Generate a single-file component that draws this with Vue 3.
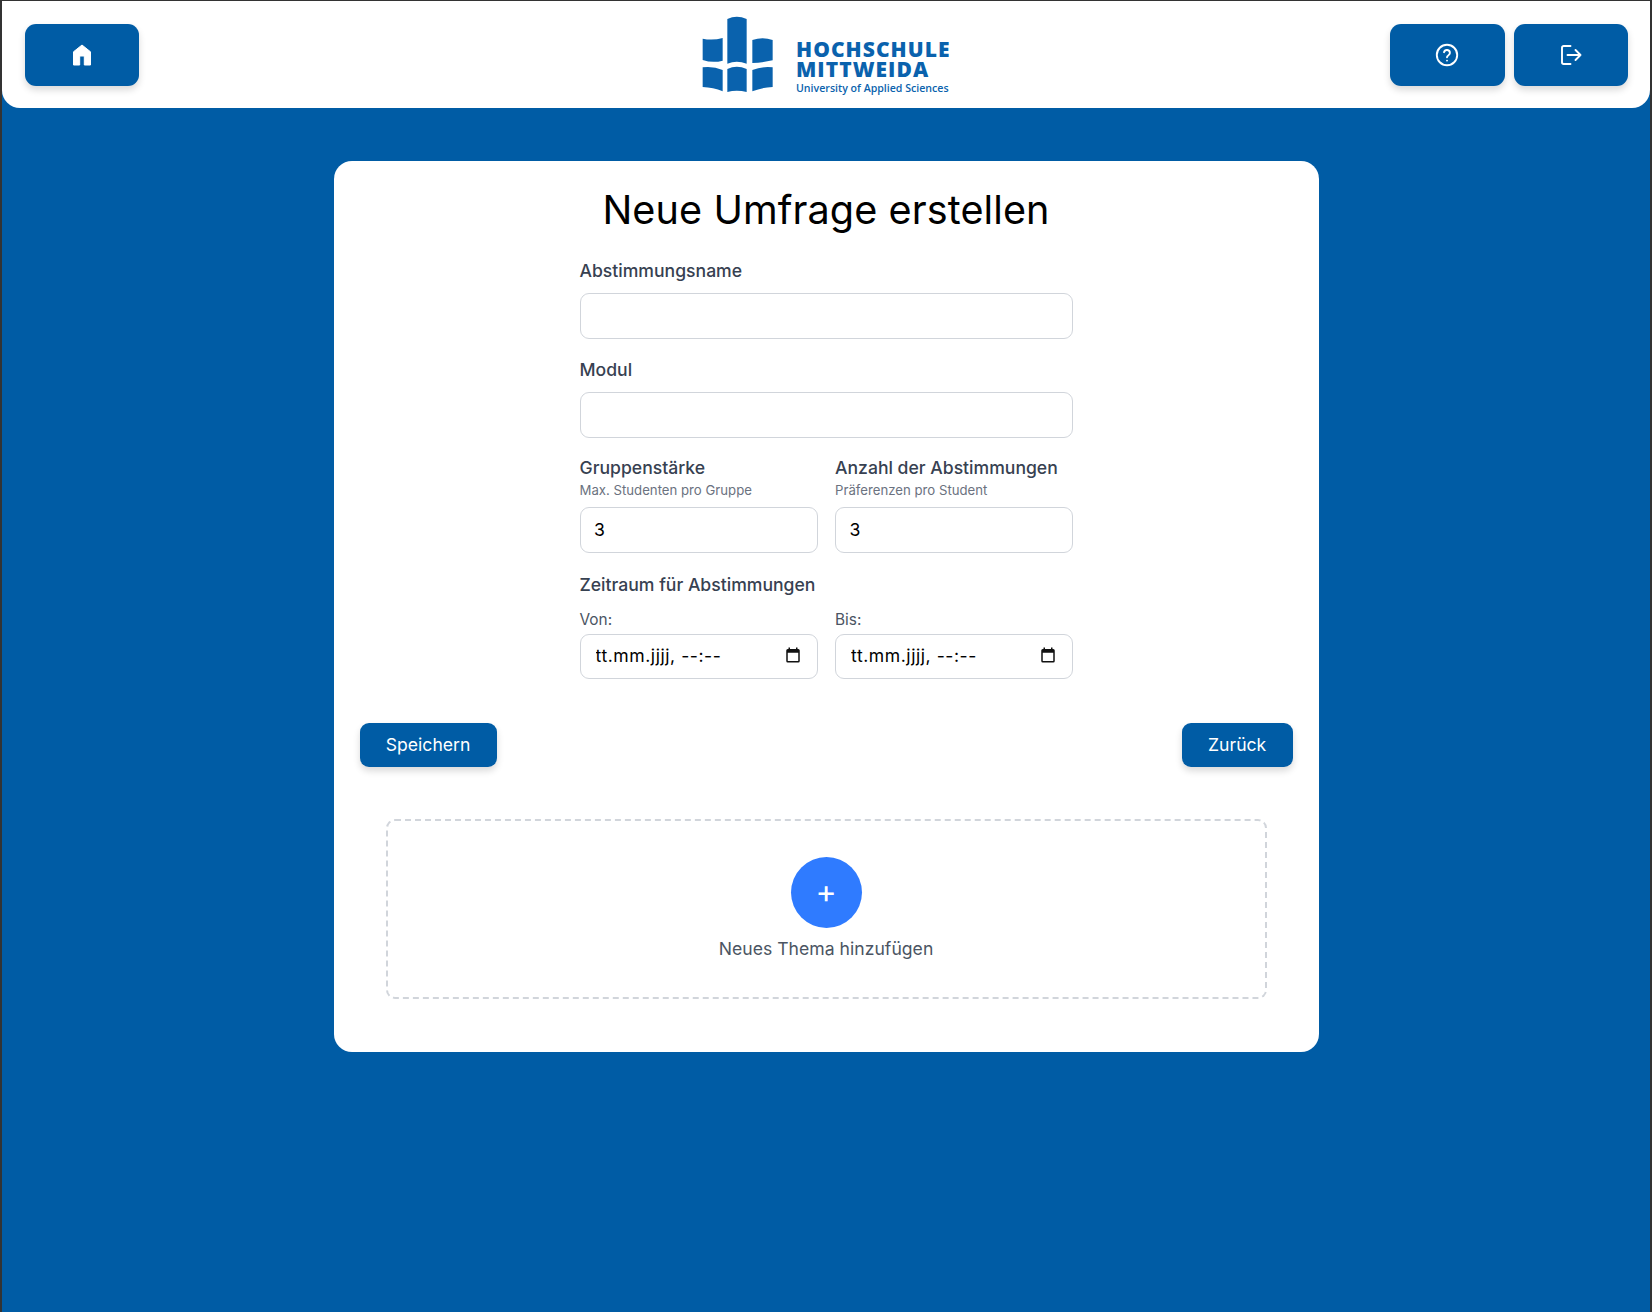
<template>
  <div class="page">
    <header class="topbar">
      <button class="nav-btn home" aria-label="Startseite">
        <svg width="24" height="24" viewBox="0 0 24 24"><path fill="#fff" stroke="#fff" stroke-width="1" stroke-linejoin="round" d="M12 2 3.500 8.800V22H9.700V13h4.600v9H20.500V8.800z" /></svg>
      </button>
      <div class="logo">
        <svg class="logo-mark" width="80" height="82" viewBox="0 0 240 246">
          <path v-for="(d, i) in logoParts" :key="i" :d="d" fill="#0a62ad" />
        </svg>
        <div class="logo-text">
          <div class="logo-name">HOCHSCHULE</div>
          <div class="logo-name">MITTWEIDA</div>
          <div class="logo-sub">University of Applied Sciences</div>
        </div>
      </div>
      <div class="nav-right">
        <button class="nav-btn help" aria-label="Hilfe">
          <svg width="24" height="24" viewBox="0 0 24 24" fill="none" stroke="#fff" stroke-width="1.9" stroke-linecap="round" stroke-linejoin="round">
            <circle cx="12" cy="12" r="10.200" />
            <path d="M9 9.200a3 3 0 0 1 5.900.9c0 2-2.900 2.500-2.900 4.200" />
            <path d="M12 17.600h.01" />
          </svg>
        </button>
        <button class="nav-btn" aria-label="Abmelden">
          <svg width="24" height="24" viewBox="0 0 24 24" fill="none" stroke="#fff" stroke-width="1.9" stroke-linecap="round" stroke-linejoin="round">
            <path d="M11.500 3H4.700A1.700 1.700 0 0 0 3 4.700v14.600A1.700 1.700 0 0 0 4.700 21h6.800" />
            <path d="M8.500 12H21.500M16.500 7l5 5-5 5" />
          </svg>
        </button>
      </div>
    </header>

    <main class="card">
      <h1>Neue Umfrage erstellen</h1>
      <form class="form" @submit.prevent>
        <div class="field">
          <label>Abstimmungsname</label>
          <input type="text" v-model="name" />
        </div>
        <div class="field">
          <label>Modul</label>
          <input type="text" v-model="modul" />
        </div>
        <div class="two numbers">
          <div class="field">
            <label>Gruppenstärke</label>
            <small>Max. Studenten pro Gruppe</small>
            <input type="text" v-model="size" />
          </div>
          <div class="field">
            <label>Anzahl der Abstimmungen</label>
            <small>Präferenzen pro Student</small>
            <input type="text" v-model="votes" />
          </div>
        </div>
        <div class="period">
          <label>Zeitraum für Abstimmungen</label>
          <div class="two">
            <div v-for="d in dates" :key="d" class="date-field">
              <span class="date-label">{{ d }}</span>
              <div class="date-box">
                <input type="text" value="tt.mm.jjjj, --:--" />
                <svg class="cal" width="18" height="18" viewBox="0 0 24 24"><path fill="#111" d="M19 4h-1V2h-2v2H8V2H6v2H5a2 2 0 0 0-2 2v14a2 2 0 0 0 2 2h14a2 2 0 0 0 2-2V6a2 2 0 0 0-2-2zm0 16H5V9h14z" /></svg>
              </div>
            </div>
          </div>
        </div>
      </form>
      <div class="actions">
        <button class="action">Speichern</button>
        <button class="action">Zurück</button>
      </div>
      <div class="add-topic">
        <div class="plus">+</div>
        <p>Neues Thema hinzufügen</p>
      </div>
    </main>
  </div>
</template>

<script setup>
import { ref } from 'vue'

const name = ref('')
const modul = ref('')
const size = ref('3')
const votes = ref('3')
const dates = ['Von:', 'Bis:']

// Buchblöcke des Logos
const logoParts = [
  'M8 74Q38 80 68 72V140Q38 148 8 138z',
  'M82 15Q110 2 140 15V149Q110 138 82 149z',
  'M157 78Q188 68 218 78V139Q188 146 157 147z',
  'M8 160Q40 156 68 168V232Q40 220 8 219z',
  'M82 165Q110 152 140 165V234Q110 226 82 234z',
  'M157 168Q188 156 218 160V219Q186 220 157 232z',
]
</script>

<style>
html,
body {
  margin: 0;
  background: #005ca5;
}
</style>

<style scoped>
* {
  box-sizing: border-box;
  font-family: 'Inter', 'Liberation Sans', sans-serif;
}
.page {
  min-height: 1312px;
  background: #005ca5;
  border: solid #333;
  border-width: 1px 2px 0;
  display: flex;
  flex-direction: column;
  align-items: center;
}
.topbar {
  width: 100%;
  height: 107px;
  background: #fff;
  border-radius: 0 0 18px 18px;
  padding: 13px 22px 0 23px;
  display: grid;
  grid-template-columns: 1fr 253px 1fr;
  align-items: start;
}
.nav-btn {
  width: 114px;
  height: 62px;
  margin-top: 10px;
  border: none;
  border-radius: 11px;
  background: #005ca5;
  box-shadow: 0 4px 7px rgba(0, 0, 0, 0.15);
  display: flex;
  align-items: center;
  justify-content: center;
}
.help {
  width: 115px;
  padding: 0 2px 0 0;
}
.nav-right {
  display: flex;
  gap: 9px;
  justify-self: end;
}
.logo {
  display: flex;
  gap: 16px;
}
.logo-mark {
  flex: none;
}
.logo-text {
  padding-top: 25px;
  color: #0a62ad;
  white-space: nowrap;
}
.logo-name {
  font-family: 'Open Sans', sans-serif;
  font-size: 21px;
  line-height: 20px;
  letter-spacing: 1.05px;
  font-weight: 800;
}
.logo-sub {
  font-family: 'Open Sans', sans-serif;
  font-size: 10.600px;
  line-height: 16px;
  margin-top: 1px;
  font-weight: 600;
}
.card {
  width: 985px;
  height: 891px;
  margin-top: 53px;
  background: #fff;
  border-radius: 18px;
  padding: 27px 26px 0;
  display: flex;
  flex-direction: column;
}
h1 {
  margin: 0;
  text-align: center;
  font-size: 39.600px;
  line-height: 44px;
  font-weight: 400;
  letter-spacing: 0.1px;
  color: #000;
}
.form {
  width: 493px;
  margin: 26px auto 0;
  display: flex;
  flex-direction: column;
  gap: 18px;
}
.field {
  display: flex;
  flex-direction: column;
  min-width: 0;
}
label {
  font-size: 17.600px;
  line-height: 26px;
  font-weight: 500;
  color: #374151;
  margin-bottom: 9px;
}
.two label {
  margin-bottom: 0;
}
small {
  font-size: 13.200px;
  line-height: 18px;
  color: #6b7280;
  margin-bottom: 8px;
}
input {
  width: 100%;
  height: 46px;
  border: 1px solid #d1d5db;
  border-radius: 9px;
  padding: 0 14px 2px 13.500px;
  font-size: 17.600px;
  color: #000;
  background: #fff;
  outline: none;
}
.two {
  display: grid;
  grid-template-columns: 238px 238px;
  gap: 17.500px;
}
.numbers {
  margin-top: -1px;
}
.period {
  display: flex;
  flex-direction: column;
  margin-top: 1px;
}
.period > label {
  margin-bottom: 11px;
}
.date-label {
  display: block;
  font-size: 15.400px;
  line-height: 22px;
  color: #4b5563;
  margin-bottom: 3px;
}
.date-box {
  position: relative;
}
.date-box input {
  height: 45px;
  padding: 0 14px 3px 15px;
  letter-spacing: 0.55px;
}
.cal {
  position: absolute;
  right: 16px;
  top: 12px;
}
.actions {
  display: flex;
  justify-content: space-between;
  margin-top: 44px;
}
.action {
  height: 44px;
  padding: 0 26.250px 2px;
  border: none;
  border-radius: 9px;
  background: #005ca5;
  color: #fff;
  font-size: 17.600px;
  box-shadow: 0 4px 7px rgba(0, 0, 0, 0.15);
}
.add-topic {
  height: 180px;
  margin: 52px 26px 0;
  border: 2px dashed #d1d5db;
  border-radius: 9px;
  display: flex;
  flex-direction: column;
  align-items: center;
  padding-top: 36px;
}
.plus {
  width: 71px;
  height: 71px;
  border-radius: 50%;
  background: #2f7bff;
  color: #fff;
  font-size: 32px;
  padding-bottom: 2px;
  display: flex;
  align-items: center;
  justify-content: center;
}
.add-topic p {
  margin: 8px 0 0;
  font-size: 17.600px;
  line-height: 26px;
  letter-spacing: 0.02px;
  color: #4b5563;
}
</style>
